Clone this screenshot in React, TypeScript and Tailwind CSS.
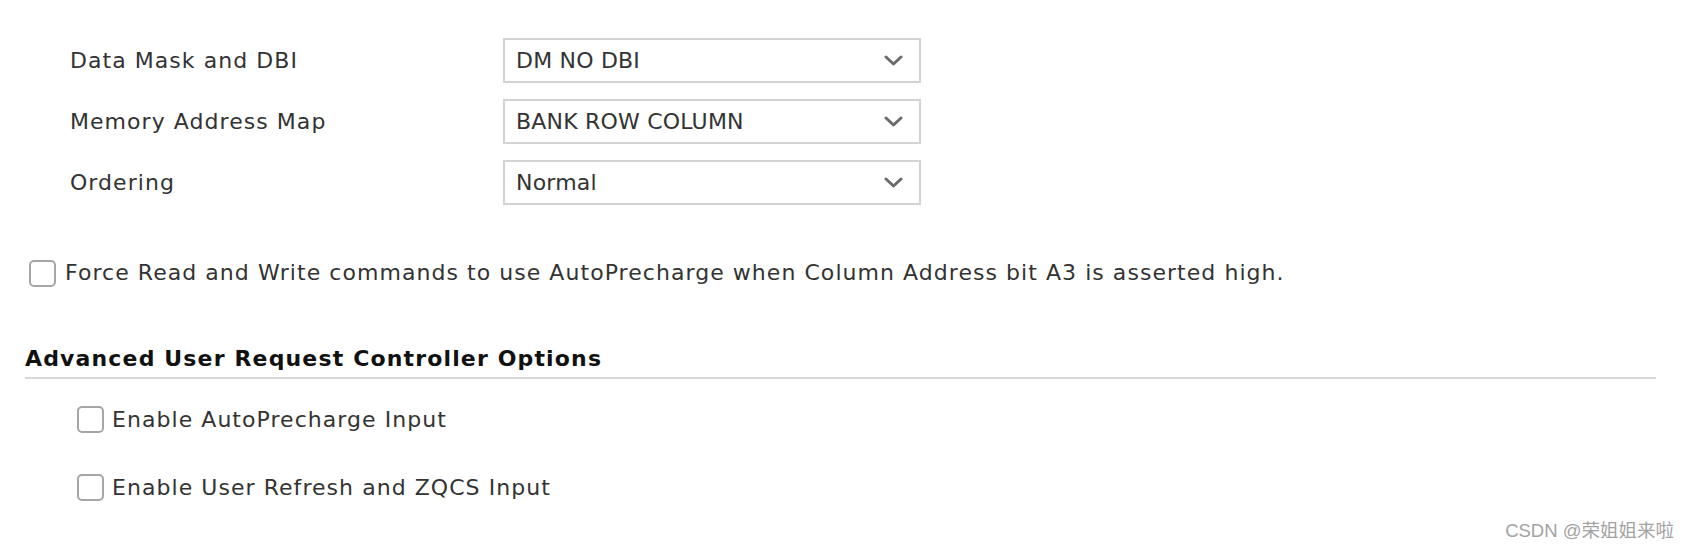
import React from "react";

// ---------------------------------------------------------------------------
// Small pieces
// ---------------------------------------------------------------------------
function Chevron() {
  return (
    <svg width="19" height="11" viewBox="0 0 19 11" className="shrink-0">
      <polyline
        points="2,2 9.5,9 17,2"
        fill="none"
        stroke="#6b6b6b"
        strokeWidth="3"
        strokeLinecap="round"
        strokeLinejoin="round"
      />
    </svg>
  );
}

function Select({ value }: { value: string }) {
  return (
    <div className="w-[418px] h-[45px] flex items-center justify-between pl-[11px] pr-[16px] bg-white border-2 border-[#d2d2d2]">
      <span className="tracking-[0.2px]">{value}</span>
      <Chevron />
    </div>
  );
}

function Checkbox() {
  return <div className="w-[27px] h-[27px] shrink-0 rounded-[5px] border-2 border-[#a6a6a6] bg-white" />;
}

const rows = [
  { label: "Data Mask and DBI", value: "DM NO DBI" },
  { label: "Memory Address Map", value: "BANK ROW COLUMN" },
  { label: "Ordering", value: "Normal" },
];

// ---------------------------------------------------------------------------
// Page
// ---------------------------------------------------------------------------
export default function App() {
  return (
    <div className="relative w-[1689px] h-[551px] bg-white text-[#333333] text-[22px] leading-[28px] font-['DejaVu_Sans',sans-serif] overflow-hidden">
      {/* ── select rows ── */}
      <div className="pt-[38px] pl-[70px] flex flex-col gap-[16px]">
        {rows.map((r) => (
          <div key={r.label} className="flex items-center">
            <span className="w-[433px] tracking-[1.05px]">{r.label}</span>
            <Select value={r.value} />
          </div>
        ))}
      </div>

      {/* ── force autoprecharge ── */}
      <div className="mt-[54px] pl-[29px] flex items-center gap-[9px] h-[28px]">
        <Checkbox />
        <span className="tracking-[1.05px]">
          Force Read and Write commands to use AutoPrecharge when Column Address bit A3 is asserted high.
        </span>
      </div>

      {/* ── advanced section ── */}
      <div className="mt-[58px] ml-[25px] mr-[33px] pb-[4px] border-b-2 border-[#d8d8d8]">
        <span className="font-bold text-[#111111] tracking-[1.15px]">Advanced User Request Controller Options</span>
      </div>

      <div className="mt-[27px] pl-[77px] flex flex-col gap-[41px]">
        <div className="flex items-center gap-[8px] h-[27px]">
          <Checkbox />
          <span className="tracking-[1.05px]">Enable AutoPrecharge Input</span>
        </div>
        <div className="flex items-center gap-[8px] h-[27px]">
          <Checkbox />
          <span className="tracking-[1.05px]">Enable User Refresh and ZQCS Input</span>
        </div>
      </div>

      {/* watermark */}
      <div className="absolute right-[15px] bottom-[9px] text-[18.5px] leading-[22px] text-[#a3a3a3] font-['Liberation_Sans','Noto_Sans_CJK_SC',sans-serif]">
        CSDN @荣姐姐来啦
      </div>
    </div>
  );
}
